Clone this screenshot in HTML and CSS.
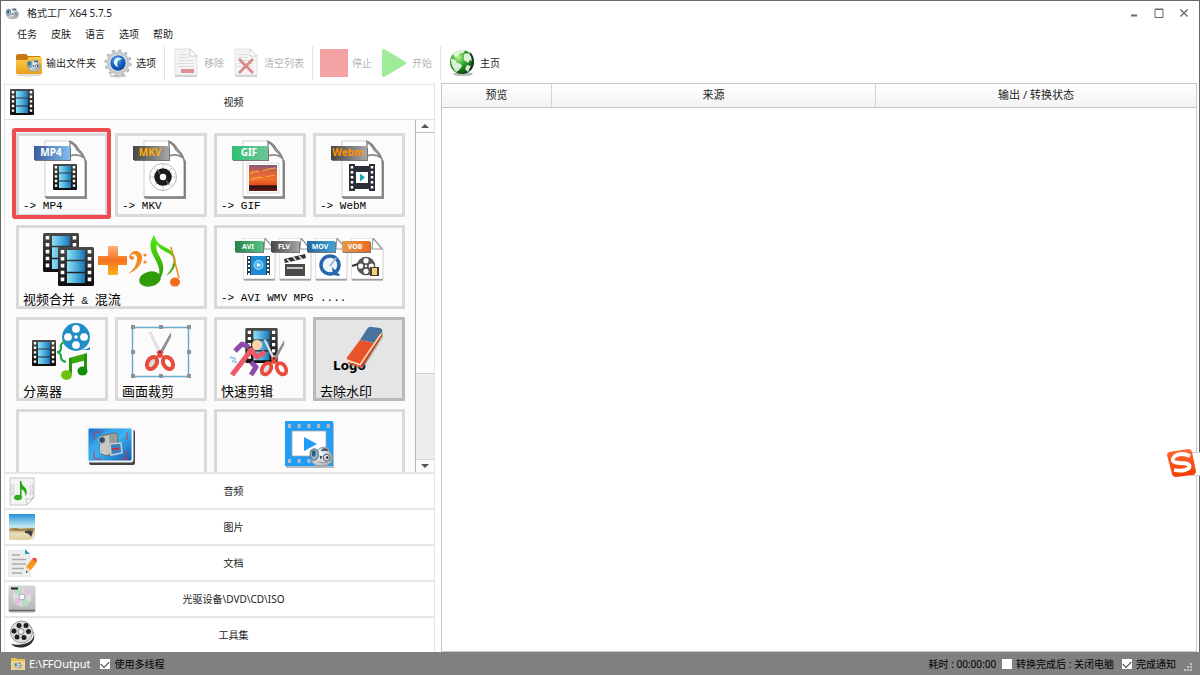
FILE: index.html
```html
<!DOCTYPE html>
<html lang="zh-CN">
<head>
<meta charset="utf-8">
<meta name="viewport" content="width=device-width, initial-scale=1">
<title>格式工厂 X64 5.7.5</title>
<link rel="stylesheet" href="styles.css">
</head>
<body>
<svg class="defs" aria-hidden="true">
  <defs>
    <linearGradient id="gFrame" x1="0" y1="0" x2="1" y2="0"><stop offset="0" stop-color="#8fe0f5"/><stop offset="0.5" stop-color="#4fb2dd"/><stop offset="1" stop-color="#1a72b4"/></linearGradient>
    <linearGradient id="gDark" x1="0" y1="0" x2="0" y2="1"><stop offset="0" stop-color="#4a4a4a"/><stop offset="1" stop-color="#0c0c0c"/></linearGradient>
    <linearGradient id="gTagBlue"><stop offset="0" stop-color="#3a5b9e"/><stop offset="1" stop-color="#82bdf0"/></linearGradient>
    <linearGradient id="gTagGray"><stop offset="0" stop-color="#464646"/><stop offset="1" stop-color="#a6a6a6"/></linearGradient>
    <linearGradient id="gTagGreen"><stop offset="0" stop-color="#2fc073"/><stop offset="1" stop-color="#6fc596"/></linearGradient>
    <linearGradient id="gTagAvi"><stop offset="0" stop-color="#268148"/><stop offset="1" stop-color="#51c683"/></linearGradient>
    <linearGradient id="gTagMov"><stop offset="0" stop-color="#22689d"/><stop offset="1" stop-color="#3fa3d8"/></linearGradient>
    <linearGradient id="gTagVob"><stop offset="0" stop-color="#e09a4c"/><stop offset="1" stop-color="#f26a1e"/></linearGradient>
    <linearGradient id="gSunset" x1="0" y1="0" x2="0" y2="1"><stop offset="0" stop-color="#7d5a80"/><stop offset="0.25" stop-color="#d8603f"/><stop offset="0.55" stop-color="#f0702c"/><stop offset="0.76" stop-color="#e0501d"/><stop offset="0.8" stop-color="#2a1010"/><stop offset="1" stop-color="#641d18"/></linearGradient>
    <linearGradient id="gGreen" x1="0" y1="0" x2="0" y2="1"><stop offset="0" stop-color="#55ee10"/><stop offset="1" stop-color="#2e9a06"/></linearGradient>
    <linearGradient id="gOrange" x1="0" y1="0" x2="0" y2="1"><stop offset="0" stop-color="#ffb27a"/><stop offset="0.5" stop-color="#f5721c"/><stop offset="1" stop-color="#ffb21c"/></linearGradient>
    <linearGradient id="gFolder" x1="0" y1="0" x2="0" y2="1"><stop offset="0" stop-color="#ffcf4a"/><stop offset="1" stop-color="#e8a01c"/></linearGradient>
    <linearGradient id="gCapture" x1="0" y1="0" x2="1" y2="1"><stop offset="0" stop-color="#1470d0"/><stop offset="0.5" stop-color="#3cb4f2"/><stop offset="1" stop-color="#0b55b0"/></linearGradient>
    <linearGradient id="gBeach" x1="0" y1="0" x2="0" y2="1"><stop offset="0" stop-color="#2391d6"/><stop offset="0.5" stop-color="#c8ecf5"/><stop offset="0.6" stop-color="#c5a468"/><stop offset="0.75" stop-color="#eadcba"/><stop offset="1" stop-color="#e3d0a0"/></linearGradient>
    <linearGradient id="gSilver" x1="0" y1="0" x2="0" y2="1"><stop offset="0" stop-color="#d6d6d6"/><stop offset="1" stop-color="#b4b4b4"/></linearGradient>
    <linearGradient id="gLogo" x1="0" y1="0" x2="0" y2="1"><stop offset="0" stop-color="#ff6a35"/><stop offset="1" stop-color="#f23c00"/></linearGradient>
    <radialGradient id="gGlobe" cx="0.35" cy="0.3" r="0.75"><stop offset="0" stop-color="#b8f59a"/><stop offset="0.45" stop-color="#2fa82b"/><stop offset="1" stop-color="#063d10"/></radialGradient>
    <radialGradient id="gBlue" cx="0.4" cy="0.3" r="0.8"><stop offset="0" stop-color="#5fb2f5"/><stop offset="0.5" stop-color="#1761c0"/><stop offset="1" stop-color="#0b3f96"/></radialGradient>
    <radialGradient id="gBody" cx="0.4" cy="0.4" r="0.7"><stop offset="0" stop-color="#ffffff"/><stop offset="1" stop-color="#a9b0b8"/></radialGradient>
  </defs>
  <symbol id="film" viewBox="0 0 24 26">
    <rect width="24" height="26" rx="1" fill="url(#gDark)"/>
    <path d="M6 2h12v6.500H6zM6 9.500h12v7H6zM6 17.500h12V24H6z" fill="url(#gFrame)"/>
    <path d="M3 2v23M21 2v23" stroke="#fff" stroke-width="2.400" stroke-dasharray="2.400 2.200"/>
  </symbol>
  <symbol id="page" viewBox="0 0 44 60">
    <path d="M2 56h40V20l1 1v38H2z" fill="#777" opacity="0.8"/>
    <path d="M1 1h24q6 2 10 9 6 5 6 13v34H1z" fill="#fff" stroke="#c4c4c4" stroke-width="0.800"/>
    <path d="M25 1q6 2 10 9 6 5 6.500 13v34H1" fill="none" stroke="#7d7d7d" stroke-width="1.500"/>
    <path d="M26 2v14q8-3 14 2-3-5-7-8-2-5-7-8z" fill="#fff" stroke="#8a8a8a" stroke-width="1.500"/>
  </symbol>
  <symbol id="minipage" viewBox="0 0 33 44">
    <path d="M1 40h31v2.500H1z" fill="#888"/>
    <path d="M0 0h22l10 11v30H0z" fill="#fff" stroke="#c2c2c2" stroke-width="0.800"/>
    <path d="M22 0l-1 11h10z" fill="#fff" stroke="#999" stroke-width="1.200"/>
  </symbol>
  <symbol id="scissors" viewBox="0 0 34 44">
    <path d="M6 2l2 0L18 22l-2 2z" fill="#e3e5e6" stroke="#c2c6c8" stroke-width="0.400"/>
    <path d="M28 2v5L19 24l-2-3z" fill="#8e9294"/>
    <path d="M15 21l4 6M19 21l-4 6" stroke="#e74c3c" stroke-width="4"/>
    <ellipse cx="9" cy="33" rx="4.500" ry="6.500" transform="rotate(32 9 33)" fill="#ddd" stroke="#e74c3c" stroke-width="4"/>
    <ellipse cx="25" cy="33" rx="4.500" ry="6.500" transform="rotate(-32 25 33)" fill="#fff" stroke="#e74c3c" stroke-width="4"/>
    <circle cx="17" cy="22" r="1" fill="#333"/>
  </symbol>
  <symbol id="mascot" viewBox="0 0 24 20">
    <path d="M3 10q0-6 6-6 2-3 7-3 4 0 4 4 4 3 3 8-1 6-9 6-6 1-9-2-2-2-2-7z" fill="url(#gBody)" stroke="#8b949c" stroke-width="0.800"/>
    <ellipse cx="6" cy="8" rx="4" ry="5.500" fill="#8fb4cb" stroke="#5d7382"/>
    <ellipse cx="5.500" cy="7" rx="1.800" ry="3" fill="#2c5b7c"/>
    <path d="M13 3q3-2 6 0v2q-3-1-6 0z" fill="#4a5560"/>
    <circle cx="18" cy="11" r="3.200" fill="#dfe5ea" stroke="#56616b"/>
    <path d="M11 9l3 1-2 3z" fill="#3c4852"/><circle cx="18.500" cy="11" r="1.300" fill="#222c35"/>
    <path d="M10 15q5 2 9 0" stroke="#8a939b" fill="none"/>
  </symbol>
  <symbol id="reel" viewBox="0 0 28 28">
    <circle cx="14" cy="14" r="13" fill="currentColor"/>
    <g fill="#fff"><circle cx="14" cy="6.500" r="3.600"/><circle cx="21.500" cy="14" r="3.600"/><circle cx="14" cy="21.500" r="3.600"/><circle cx="6.500" cy="14" r="3.600"/><circle cx="14" cy="14" r="1.600"/></g>
  </symbol>
  <symbol id="sheet" viewBox="0 0 28 30">
    <path d="M3 27h22v2H3z" fill="#d0d0d0"/>
    <path d="M3 1h15l7 7v19H3z" fill="#f4f4f4" stroke="#dcdcdc" stroke-width="0.800"/>
    <path d="M18 1v7h7z" fill="#fff" stroke="#c4c4c4" stroke-width="0.800"/>
    <path d="M6 6.500h9M6 9.500h10M6 12.500h15M6 15.500h15M6 18.500h15" stroke="#dadddb"/>
  </symbol>
</svg>

<div class="window">
  <header class="titlebar">
    <svg class="app-icon" viewBox="0 0 24 20" aria-hidden="true"><use href="#mascot"/></svg>
    <h1 class="title">格式工厂 X64 5.7.5</h1>
    <div class="window-controls">
      <button type="button" aria-label="最小化"><svg viewBox="0 0 12 12"><path d="M3 8.500h6" stroke="#666" stroke-width="2"/></svg></button>
      <button type="button" aria-label="最大化"><svg viewBox="0 0 12 12"><path d="M2 2.500h8v8H2zM2 2h8" fill="none" stroke="#666"/></svg></button>
      <button type="button" aria-label="关闭"><svg viewBox="0 0 12 12"><path d="M2.500 2.500l7 7M9.500 2.500l-7 7" stroke="#666" stroke-width="1.400"/></svg></button>
    </div>
  </header>

  <nav class="menubar">
    <button type="button">任务</button>
    <button type="button">皮肤</button>
    <button type="button">语言</button>
    <button type="button">选项</button>
    <button type="button">帮助</button>
  </nav>

  <div class="toolbar">
    <button type="button" class="tool">
      <svg viewBox="0 0 28 30" aria-hidden="true"><ellipse cx="15" cy="27" rx="13" ry="1.500" fill="#ddd"/><path d="M2 8q0-2 2-2h8l2 2h11q2 0 2 2v4H2z" fill="#c9790f"/><path d="M2 12h11l2-3h11q2 0 2 2v14q0 1-1 1H3q-1 0-1-1z" fill="url(#gFolder)"/><use href="#mascot" x="12" y="11" width="15" height="13"/></svg>
      输出文件夹</button>
    <button type="button" class="tool">
      <svg viewBox="0 0 28 30" aria-hidden="true"><ellipse cx="14" cy="28" rx="9" ry="1.500" fill="#ccc"/><circle cx="14" cy="15" r="12.600" fill="none" stroke="#b1b4b6" stroke-width="2" stroke-dasharray="3.200 3.390"/><circle cx="14" cy="15" r="10" fill="#f2f2f2" stroke="#c6c9cb" stroke-width="3"/><circle cx="14" cy="15" r="7.700" fill="url(#gBlue)"/><path d="M19 11q-7-4-9 2-1 4 4 6-2-5 1-7 2-1 4-1z" fill="#e5f4ff"/></svg>
      选项</button>
    <span class="divider"></span>
    <button type="button" class="tool" disabled>
      <svg viewBox="0 0 28 30" aria-hidden="true"><use href="#sheet"/><path d="M9 21h13v4H9z" fill="#e09090"/></svg>
      移除</button>
    <button type="button" class="tool" disabled>
      <svg viewBox="0 0 28 30" aria-hidden="true"><use href="#sheet"/><path d="M7 11l14 14M21 11L7 25" stroke="#d98787" stroke-width="2.600"/></svg>
      清空列表</button>
    <span class="divider"></span>
    <button type="button" class="tool" disabled>
      <svg viewBox="0 0 28 30" aria-hidden="true"><path d="M0 1h28v28H0z" fill="#f3a3a3"/></svg>
      停止</button>
    <button type="button" class="tool" disabled>
      <svg viewBox="0 0 28 30" aria-hidden="true"><path d="M2 3q0-2 2-2l22 13q1 1 0 2L4 29q-2 0-2-2z" fill="#a0eb9a"/></svg>
      开始</button>
    <span class="divider"></span>
    <button type="button" class="tool">
      <svg viewBox="0 0 28 30" aria-hidden="true"><ellipse cx="15" cy="26" rx="10" ry="2" fill="#bbb"/><circle cx="14" cy="14" r="12" fill="url(#gGlobe)"/><path d="M5 6q6-5 12-4-1 4-5 3-2 4-5 4zM16 6l6-1q4 5 4 9l-4-2-2 3-4-3zM3 11q5 0 6 4 4 0 5 3-3 5-6 6-5-5-5-13zM19 17l4 1-3 6-3-3z" fill="#effbea" opacity="0.9"/><path d="M22 5q6 8 0 17" fill="none" stroke="#143a18" stroke-width="2"/></svg>
      主页</button>
  </div>

  <main class="workspace">
    <aside class="sidebar">
      <button type="button" class="category open" aria-expanded="true">
        <svg viewBox="0 0 28 28" aria-hidden="true"><use href="#film" x="2" y="1" width="24" height="26"/></svg>
        <span>视频</span>
      </button>

      <div class="tiles-view">
        <div class="tiles">
          <button type="button" class="tile marked">
            <svg class="art" viewBox="0 0 86 64" aria-hidden="true"><use href="#page" x="25" y="4" width="44" height="60"/><path d="M16 12h36v13H16z" fill="#777"/><path d="M15 10h36v14H15z" fill="url(#gTagBlue)"/><text class="tag" x="32" y="20" fill="#fff">MP4</text><use href="#film" x="34" y="28" width="24" height="26"/></svg>
            <span class="caption latin">-&gt; MP4</span>
          </button>
          <button type="button" class="tile">
            <svg class="art" viewBox="0 0 86 64" aria-hidden="true"><use href="#page" x="25" y="4" width="44" height="60"/><path d="M16 12h36v13H16z" fill="#777"/><path d="M15 10h36v14H15z" fill="url(#gTagGray)"/><text class="tag" x="32" y="20" fill="#ffae00">MKV</text><circle cx="45" cy="41" r="13.500" fill="#fff" stroke="#bbb"/><path d="M45 28v26M32 41h26M36 32l18 18M54 32L36 50" stroke="#ccc"/><circle cx="45" cy="41" r="6" fill="#fff" stroke="#1a1a1a" stroke-width="5.500"/><path d="M39 33l3 5M51 49l-3-5" stroke="#777"/></svg>
            <span class="caption latin">-&gt; MKV</span>
          </button>
          <button type="button" class="tile">
            <svg class="art" viewBox="0 0 86 64" aria-hidden="true"><use href="#page" x="25" y="4" width="44" height="60"/><path d="M16 12h36v13H16z" fill="#777"/><path d="M15 10h36v14H15z" fill="url(#gTagGreen)"/><text class="tag" x="32" y="20" fill="#fff">GIF</text><path d="M30 27h32v30H30z" fill="#fff" stroke="#ddd"/><path d="M32 29h28v26H32z" fill="url(#gSunset)"/><path d="M33 38q5-4 9-2M46 35q6-3 13-3M34 44q8-4 12-2M49 41l9-2" fill="none" stroke="#ffa640" stroke-width="1.200"/></svg>
            <span class="caption latin">-&gt; GIF</span>
          </button>
          <button type="button" class="tile">
            <svg class="art" viewBox="0 0 86 64" aria-hidden="true"><use href="#page" x="25" y="4" width="44" height="60"/><path d="M16 12h36v13H16z" fill="#777"/><path d="M15 10h36v14H15z" fill="url(#gTagGray)"/><text class="tag" x="32" y="20" fill="#ff9000">Webm</text><path d="M33 28h6v2h14v-2h6v27h-6v-2H39v2h-6z" fill="#2b3038"/><path d="M40 36h12v11H40z" fill="#fff"/><path d="M44 37.500l5 4-5 4z" fill="#10a7b5"/><path d="M36 30v24M56 30v24" stroke="#fff" stroke-width="2.500" stroke-dasharray="2.500 2.500"/></svg>
            <span class="caption latin">-&gt; WebM</span>
          </button>

          <button type="button" class="tile wide">
            <svg class="art art-wide" viewBox="20 228 185 64" aria-hidden="true">
              <use href="#film" x="44" y="233" width="36" height="39"/><use href="#film" x="59" y="247" width="36" height="39"/>
              <path d="M109 246h10v10h9v9h-9v10h-10v-10H99v-9h10z" fill="url(#gOrange)"/>
              <path d="M130 257q2-7 8-6 6 2 5 9-2 9-14 14 9-7 9-15 0-5-4-5-2 0-2 2 4 0 3 3-4 2-5-2z" fill="#f28a1d"/><circle cx="146" cy="255" r="1.600" fill="#f28a1d"/><circle cx="146" cy="262" r="1.600" fill="#f28a1d"/>
              <ellipse cx="151" cy="279" rx="11" ry="7.500" transform="rotate(-12 151 279)" fill="#319c09"/>
              <path d="M155 235c-12 18 11 27 4 43l3-1c8-17-8-22-4-33 4 10 20 7 16 20-1 5-4 8-7 12 12-7 12-20 4-26-8-5-13-5-16-15z" fill="url(#gGreen)"/>
              <path d="M172 247l8 31" stroke="#f28a1d" stroke-width="1.500"/><ellipse cx="176" cy="282" rx="5" ry="4.500" fill="#f46b19"/>
            </svg>
            <span class="caption">视频合并<span class="latin"> &amp; </span>混流</span>
          </button>
          <button type="button" class="tile wide">
            <svg class="art art-wide" viewBox="218 228 185 64" aria-hidden="true">
              <use href="#minipage" x="244" y="238" width="33" height="44"/><use href="#minipage" x="280" y="238" width="33" height="44"/><use href="#minipage" x="316" y="238" width="33" height="44"/><use href="#minipage" x="352" y="238" width="33" height="44"/>
              <path d="M237 242h28v11h-28zM273 242h28v11h-28zM309 242h28v11h-28zM344 242h28v11h-28z" fill="#777"/>
              <path d="M236 241h28v11h-28z" fill="url(#gTagAvi)"/><path d="M272 241h28v11h-28z" fill="url(#gTagGray)"/><path d="M308 241h28v11h-28z" fill="url(#gTagMov)"/><path d="M343 241h28v11h-28z" fill="url(#gTagVob)"/>
              <text class="minitag" x="249" y="249">AVI</text><text class="minitag" x="285" y="249">FLV</text><text class="minitag" x="321" y="249">MOV</text><text class="minitag" x="356" y="249">VOB</text>
              <path d="M248 256h23v19h-23z" fill="#2c3f50"/><path d="M252 256h15v19h-15z" fill="#1b8bd4"/><path d="M250 257v18M269 257v18" stroke="#fff" stroke-width="2" stroke-dasharray="2 2"/><circle cx="259.500" cy="265" r="4.500" fill="#4cb5ee" stroke="#a8ddf8"/><path d="M258 263l4 2-4 2z" fill="#fff"/>
              <path d="M286 264h20v12h-20z" fill="#4a4a4a"/><path d="M286 263l-1-4 21-5 1 4z" fill="#333"/><path d="M288 259l3 3M294 257l3 3M300 256l3 3M288 268h16" stroke="#eee" stroke-width="1.500"/>
              <circle cx="331" cy="265" r="9" fill="#edf6fc" stroke="#2766ae" stroke-width="3.500"/><path d="M333 267l8 8-1 1-6-1z" fill="#2766ae"/><path d="M331 266l6-8" stroke="#a2b9cb" stroke-width="2"/>
              <g color="#555"><use href="#reel" x="357" y="256" width="20" height="20"/></g><path d="M353 266l6-2" stroke="#333" stroke-width="2"/><path d="M371 267h9v9h-9z" fill="#493e30"/><path d="M373 268h5v7h-5z" fill="#f2d17b"/>
            </svg>
            <span class="caption latin">-&gt; AVI WMV MPG ....</span>
          </button>

          <button type="button" class="tile">
            <svg class="art" viewBox="20 320 86 64" aria-hidden="true"><use href="#film" x="33" y="340" width="24" height="26"/><g color="#218dc4"><use href="#reel" x="62" y="322" width="30" height="30"/></g><path d="M79 350q9 0 12-3v3z" fill="#218dc4"/><path d="M66 342q-5 1-4 6 0 4-4 4 4 1 4 5 0 4 5 5" fill="none" stroke="#25a64a" stroke-width="2.200"/><path d="M70 358l18-5v7l-16 4z" fill="#3aa80b"/><path d="M71.500 358v16M86.500 354v16" stroke="#23980b" stroke-width="3"/><ellipse cx="67.500" cy="375" rx="5.500" ry="4.800" fill="#6cc10a"/><ellipse cx="83.500" cy="371" rx="5" ry="4.500" fill="#128f0a"/></svg>
            <span class="caption">分离器</span>
          </button>
          <button type="button" class="tile">
            <svg class="art" viewBox="119 320 86 64" aria-hidden="true"><path d="M133.500 327.500h56v49h-56z" fill="none" stroke="#6aabd2" stroke-width="1.500"/><use href="#scissors" x="144" y="330" width="34" height="44"/><path d="M132 325h4v4h-4zM160 325h4v4h-4zM188 325h4v4h-4zM132 350h4v4h-4zM188 350h4v4h-4zM132 374h4v4h-4zM160 374h4v4h-4zM188 374h4v4h-4z" fill="#8d9194"/></svg>
            <span class="caption">画面裁剪</span>
          </button>
          <button type="button" class="tile">
            <svg class="art" viewBox="218 320 86 64" aria-hidden="true"><use href="#film" x="246" y="328" width="33" height="35"/><circle cx="258" cy="345" r="5" fill="#fdd5aa"/><path d="M236 351l7-7 7 3M252 362l5 5-5 8" fill="none" stroke="#8c4bab" stroke-width="5" stroke-linejoin="round"/><path d="M266 352l-8 5-6-7-9 12-10 13" fill="none" stroke="#ef5867" stroke-width="5" stroke-linejoin="round"/><path d="M231 357l6 2M233 361l5 1" stroke="#97c9ef" stroke-width="2"/><use href="#scissors" x="259" y="338" width="32" height="41"/></svg>
            <span class="caption">快速剪辑</span>
          </button>
          <button type="button" class="tile hot">
            <svg class="art" viewBox="317 320 86 64" aria-hidden="true"><text class="logo-word" x="334" y="370">Logo</text><path d="M350 364l12 4 22-36v5l-20 32-13-3z" fill="#777" opacity="0.5"/><path d="M361 340l7-11q2-3 5-2l8 1q3 1 2 4l-8 11z" fill="#48719d"/><path d="M361 340l14 3-14 21-13-4q-1-2 1-4z" fill="#e9532b"/><path d="M375 343l7-11 1 4-20 32-2-4z" fill="#c8401c"/><path d="M348 360l13 5 21-31" fill="none" stroke="#ffe1b6" stroke-width="1.500"/><path d="M349 362.500l13 4.500" stroke="#e9532b" stroke-width="1.500"/></svg>
            <span class="caption">去除水印</span>
          </button>

          <button type="button" class="tile wide" aria-label="屏幕录像">
            <svg class="art art-wide" viewBox="20 411 185 64" aria-hidden="true"><rect x="90" y="429" width="46" height="35" rx="2" fill="#444"/><rect x="88.500" y="426.500" width="45" height="34" rx="2" fill="url(#gCapture)" stroke="#f4f4f4" stroke-width="2"/><path d="M90 445l18-17h14l-28 32h-4z" fill="#3cadf0" opacity="0.5"/><path d="M95 439v-8h8M95 450v8h8M121 458h7v-8M128 431v8" fill="none" stroke="#c43a4c"/><path d="M101 435l14-3q4 0 4 3l-1 17-10 3-7-3z" fill="#9c9c98" stroke="#666" stroke-width="0.800"/><path d="M101 436l9-2 1 18-4 2-6-2z" fill="#c9c7c0"/><circle cx="103" cy="439" r="3.500" fill="#31506d" stroke="#c6c6c6"/><path d="M111 443l11-1 1 10-11 2z" fill="#3b83bf" stroke="#ccc" stroke-width="1.500"/><path d="M113 448h7" stroke="#b63450" stroke-width="2"/></svg>
          </button>
          <button type="button" class="tile wide" aria-label="播放器">
            <svg class="art art-wide" viewBox="218 411 185 64" aria-hidden="true"><path d="M287 422h48v45h-48z" fill="#bbb"/><path d="M286 420h48v45h-48z" fill="#209df8"/><path d="M293 430h34v25h-34z" fill="#fff" stroke="#aaa" stroke-width="0.800"/><path d="M289 425h43M289 460h43" stroke="#b8bfc4" stroke-width="4" stroke-dasharray="3 6.700"/><path d="M305 436l13 7-13 7z" fill="#209df8"/><use href="#mascot" x="309" y="445" width="25" height="21"/></svg>
          </button>
        </div>
        <div class="scrollbar">
          <button type="button" aria-label="向上滚动"><svg viewBox="0 0 8 4"><path d="M4 0l4 4H0z" fill="#555"/></svg></button>
          <div class="track"><div class="thumb"></div></div>
          <button type="button" aria-label="向下滚动"><svg viewBox="0 0 8 4"><path d="M0 0h8L4 4z" fill="#555"/></svg></button>
        </div>
      </div>

      <button type="button" class="category" aria-expanded="false">
        <svg viewBox="0 0 28 28" aria-hidden="true"><path d="M2 1h24v19l-7 8H2z" fill="#f4f4f4" stroke="#c5c5c5"/><path d="M26 20l-7 8q0-5-1-6 5 1 8-2z" fill="#fff" stroke="#aaa" stroke-width="0.700"/><path d="M12 21V4h1.500q0 4 3 6 4 4 1 9 0-5-4-7v9z" fill="#27a50c"/><ellipse cx="10" cy="20.500" rx="4" ry="2.800" fill="#30ae18"/><path d="M6 8q-2 5 0 10M4 7q-3 6 0 12M22 8q2 5 0 10M24 7q3 6 0 11" fill="none" stroke="#ccc"/></svg>
        <span>音频</span>
      </button>
      <button type="button" class="category" aria-expanded="false">
        <svg viewBox="0 0 28 28" aria-hidden="true"><path d="M1 1h26v26H1z" fill="url(#gBeach)"/><path d="M2 16q5-2 10 0l14-1-1 4q-4-1-6-2-7 2-17 0z" fill="#a07f4c"/><path d="M17 18q5-2 8 1l-2 5q-2-4-6-4z" fill="#3f4142"/><path d="M22 27l5-5v5z" fill="#eee"/></svg>
        <span>图片</span>
      </button>
      <button type="button" class="category" aria-expanded="false">
        <svg viewBox="0 0 28 28" aria-hidden="true"><path d="M0 1h17l6 6v21H0z" fill="#ededed"/><path d="M17 0v5h5z" fill="#2c9ac5"/><path d="M4 6h8M4 10.500h14M4 15h14M4 19.500h12M4 24h10" stroke="#aaa" stroke-width="1.300"/><path d="M18 18l6-8 5 3-6 8z" fill="#f29a1e"/><path d="M24 10l1-1q3-1 4 2l-1 2z" fill="#e64050"/><path d="M18 18l5 3-5 3z" fill="#f3d6a7"/><path d="M18 22v2l2-1z" fill="#333"/></svg>
        <span>文档</span>
      </button>
      <button type="button" class="category" aria-expanded="false">
        <svg viewBox="0 0 28 28" aria-hidden="true"><rect x="0.500" y="0.500" width="27" height="27" rx="2" fill="url(#gSilver)"/><circle cx="14" cy="12" r="9.500" fill="#dcdcdc"/><path d="M14 12L6 7a9.500 9.500 0 0 1 8-4.500z" fill="#b4dfc6"/><path d="M14 12l8 5a9.500 9.500 0 0 1-8 4.500z" fill="#b4dfc6"/><path d="M14 12l9-3a9.500 9.500 0 0 0-6-6z" fill="#e3c4e0"/><path d="M14 12l-9 3a9.500 9.500 0 0 0 6 6z" fill="#e3c4e0"/><circle cx="14" cy="12" r="3" fill="#fff" stroke="#aaa"/><path d="M3 3.500h7" stroke="#222" stroke-width="2"/><path d="M1 25.500h26" stroke="#666" stroke-width="1.500"/></svg>
        <span>光驱设备\DVD\CD\ISO</span>
      </button>
      <button type="button" class="category" aria-expanded="false">
        <svg viewBox="0 0 28 28" aria-hidden="true"><circle cx="13.500" cy="11" r="11" fill="#dcdcdc" stroke="#999"/><g fill="#1e1e1e"><circle cx="11" cy="4.500" r="2.500"/><circle cx="18" cy="4.500" r="2.500"/><circle cx="20.500" cy="10.500" r="2.500"/><circle cx="16" cy="16.500" r="2.500"/><circle cx="9" cy="16" r="2.500"/><circle cx="6" cy="10" r="2.500"/></g><circle cx="13" cy="10.500" r="3" fill="#eee" stroke="#888"/><path d="M25 10q3 8-6 12-7 3-16 1 5 5 14 3 11-4 9-14z" fill="#2c2c2c"/><path d="M24 13q1 5-4 8" fill="none" stroke="#ddd" stroke-dasharray="1.500 1.500"/></svg>
        <span>工具集</span>
      </button>
    </aside>

    <section class="queue">
      <table>
        <thead>
          <tr><th class="col-preview" scope="col">预览</th><th class="col-source" scope="col">来源</th><th scope="col">输出 / 转换状态</th></tr>
        </thead>
      </table>
    </section>
  </main>

  <footer class="statusbar">
    <button type="button" class="output-path">
      <svg viewBox="0 0 14 14" aria-hidden="true"><path d="M0 1h5l1 1h8v11H0z" fill="#e9bd55"/><path d="M0 4h14v9H0z" fill="#f0d489"/><use href="#mascot" x="3" y="5" width="8" height="7"/></svg>
      E:\FFOutput</button>
    <label class="check"><input type="checkbox" checked>使用多线程</label>
    <div class="status-right">
      <span>耗时 : 00:00:00</span>
      <label class="check"><input type="checkbox">转换完成后 : 关闭电脑</label>
      <label class="check"><input type="checkbox" checked>完成通知</label>
      <svg class="grip" viewBox="0 0 9 9" aria-hidden="true"><path d="M6 0h2v2H6zM3 3h2v2H3zM6 3h2v2H6zM0 6h2v2H0zM3 6h2v2H3zM6 6h2v2H6z" fill="#c2c2c2"/></svg>
    </div>
  </footer>

  <button type="button" class="ime" aria-label="输入法">
    <svg viewBox="0 0 33 30" aria-hidden="true"><path d="M24 4h9v24h-9z" fill="#fff"/><path d="M24 4.500h9M24 27.500h9" stroke="#c5cfe4"/><path d="M2 4l19-3q3 0 4 3l4 19q0 3-3 4l-17 2q-3 0-4-3L0 7q0-2 2-3z" fill="url(#gLogo)"/><path d="M23 8q-9-4-15 0-6 6 4 7 13 0 10 5-5 4-15 2" fill="none" stroke="#fff" stroke-width="3.800"/></svg>
  </button>
</div>
</body>
</html>
```
FILE: styles.css
```css
* {
  box-sizing: border-box;
}

body {
  margin: 0;
  color: #1c1c1c;
  font-family: "Noto Sans", "Noto Sans CJK SC", sans-serif;
  font-size: 10px;
  line-height: 16px;
}

button {
  margin: 0;
  padding: 0;
  border: 0;
  background: none;
  color: inherit;
  font: inherit;
}

svg {
  display: block;
  flex: none;
}

.defs {
  position: absolute;
  width: 0;
  height: 0;
}

.window {
  position: relative;
  display: flex;
  flex-direction: column;
  height: 100vh;
  min-height: 480px;
  overflow: hidden;
  background: #fff;
  border-top: 1px solid #666;
}

.titlebar,
.menubar,
.toolbar,
.workspace {
  border-left: 1px solid #666;
  border-right: 1px solid #666;
}

.titlebar {
  display: flex;
  align-items: center;
  gap: 8px;
  height: 24px;
  padding: 0 9px 0 4px;
}

.app-icon {
  width: 14px;
  height: 13px;
}

.title {
  margin: 0;
  font-size: 10px;
  font-weight: 400;
}

.window-controls {
  display: flex;
  gap: 13px;
  margin-left: auto;
}

.window-controls svg {
  width: 12px;
  height: 12px;
}

.menubar {
  display: flex;
  align-items: center;
  gap: 14px;
  height: 18px;
  padding-left: 16px;
}

.toolbar {
  display: flex;
  align-items: center;
  gap: 8px;
  height: 40px;
  padding-left: 13px;
}

.tool {
  display: flex;
  align-items: center;
  gap: 4px;
}

.tool svg {
  width: 28px;
  height: 30px;
}

.tool:disabled {
  color: #b4b4b4;
}

.divider {
  width: 1px;
  height: 34px;
  margin-right: -1px;
  background: #e2e2e2;
}

.workspace {
  display: grid;
  flex: 1;
  grid-template-columns: minmax(431px, 36%) 1fr;
  gap: 6px;
  min-height: 0;
  padding: 0 2px 0 3px;
}

.sidebar {
  display: flex;
  flex-direction: column;
  min-height: 0;
  padding-top: 1px;
  border-left: 1px solid #e6e6e6;
  border-right: 1px solid #e6e6e6;
}

.category {
  display: flex;
  flex: none;
  align-items: center;
  height: 36px;
  padding: 0 3px;
  border-top: 2px solid #e6e6e6;
  background: #fff;
}

.category.open {
  border-top-width: 1px;
  border-bottom: 1px solid #e0e0e0;
}

.category svg {
  width: 28px;
  height: 28px;
  overflow: visible;
}

.category span {
  flex: 1;
  text-align: center;
}

.tiles-view {
  display: flex;
  flex: 1;
  min-height: 0;
  overflow: hidden;
  background: #fbfbfb;
}

.tiles {
  display: grid;
  flex: 1;
  grid-template-columns: repeat(4, 1fr);
  grid-auto-rows: 84px;
  align-content: start;
  gap: 8px 7px;
  padding: 13px 10px 0 11px;
}

.tile {
  position: relative;
  display: flex;
  flex-direction: column;
  align-items: center;
  min-width: 0;
  border: 3px solid #d9d9d9;
  border-radius: 1px;
  background: #fbfbfb;
  color: #000;
}

.tile.wide {
  grid-column: span 2;
}

.tile.hot {
  border-color: #b9b9b9;
  background: #e5e5e5;
}

.tile.marked::after {
  position: absolute;
  inset: -8px -6px -5px -7px;
  border: 4px solid #ee4b50;
  border-radius: 3px;
  content: "";
}

.art {
  width: 86px;
  height: 64px;
}

.art-wide {
  width: 185px;
}

.caption {
  align-self: stretch;
  padding-left: 4px;
  font-family: "Noto Sans CJK SC", sans-serif;
  font-size: 13px;
  line-height: 13px;
  text-align: left;
  white-space: pre;
}

.latin {
  font-family: "Liberation Mono", monospace;
  font-size: 11px;
}

.tag,
.minitag {
  font-family: "Noto Sans", sans-serif;
  font-size: 10px;
  font-weight: 700;
  text-anchor: middle;
}

.minitag {
  fill: #fff;
  font-size: 7px;
}

.logo-word {
  font-family: "DejaVu Sans", sans-serif;
  font-size: 12px;
  font-weight: 700;
}

.scrollbar {
  display: flex;
  flex-direction: column;
  width: 19px;
  border-left: 1px solid #b5b5b5;
}

.scrollbar button {
  display: flex;
  align-items: center;
  justify-content: center;
  height: 12px;
}

.scrollbar svg {
  width: 8px;
  height: 4px;
}

.track {
  flex: 1;
  border-top: 1px solid #c4c4c4;
  border-bottom: 1px solid #d5d5d5;
  background: #eee;
}

.thumb {
  height: 74%;
  border-bottom: 1px solid #d0d0d0;
  background: #fcfcfc;
}

.queue {
  min-width: 0;
  border: 1px solid #c8c8c8;
  background: #fff;
}

table {
  width: 100%;
  border-collapse: collapse;
  table-layout: fixed;
}

th {
  height: 23px;
  padding: 0;
  border-right: 1px solid #d4d4d4;
  border-bottom: 1px solid #c4c4c4;
  background: linear-gradient(#fff, #f3f3f3);
  font-size: 11px;
  font-weight: 400;
}

th:last-child {
  border-right: 0;
}

.col-preview {
  width: 14.5%;
}

.col-source {
  width: 43%;
}

.statusbar {
  display: flex;
  flex: none;
  align-items: center;
  gap: 10px;
  height: 23px;
  padding: 0 7px 0 11px;
  background: #808080;
  color: #000;
}

.output-path {
  display: flex;
  align-items: center;
  gap: 4px;
  color: #fff;
  font-size: 11px;
}

.output-path svg {
  width: 14px;
  height: 14px;
}

.check {
  display: flex;
  align-items: center;
  gap: 4px;
}

.check input {
  display: grid;
  place-items: center;
  width: 10px;
  height: 10px;
  margin: 0;
  appearance: none;
  background: #fff;
}

.check input:checked::before {
  width: 7px;
  height: 4px;
  border: solid #333;
  border-width: 0 0 1px 1px;
  content: "";
  rotate: -45deg;
}

.status-right {
  display: flex;
  align-items: center;
  gap: 8px;
  margin-left: auto;
}

.status-right > span {
  margin-right: -2px;
}

.grip {
  align-self: flex-end;
  width: 9px;
  height: 9px;
}

.ime {
  position: absolute;
  top: 447px;
  right: 0;
}

.ime svg {
  width: 33px;
  height: 30px;
}
```
